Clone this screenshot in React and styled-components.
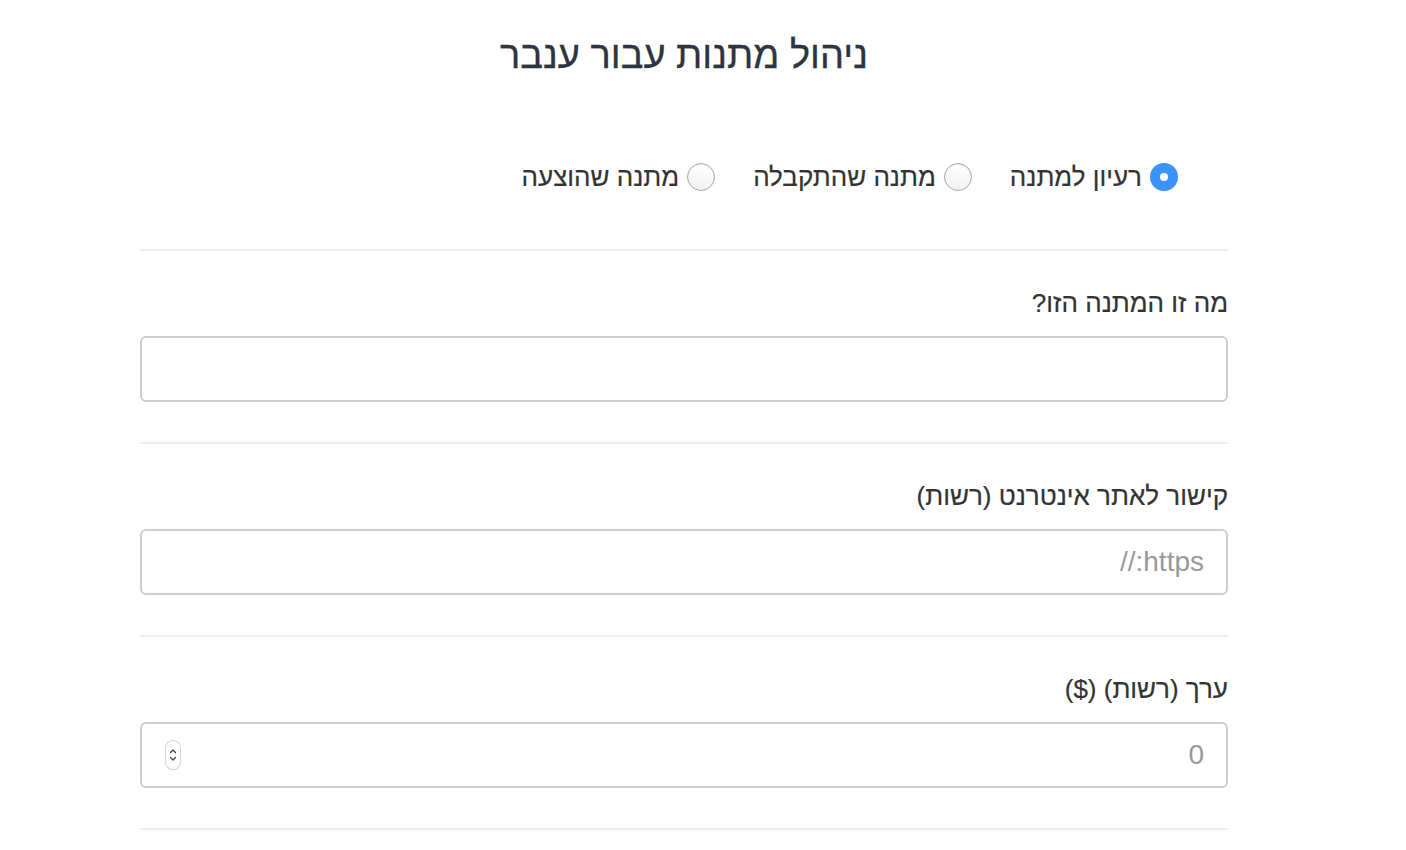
import React from "react";
import styled, { createGlobalStyle } from "styled-components";

const Global = createGlobalStyle`
  html, body { margin: 0; padding: 0; background: #fff; }
  body {
    font-family: "Liberation Sans", Arial, sans-serif;
    color: #333;
    direction: rtl;
  }
`;

const Page = styled.div`
  width: 1088px;
  margin: 0 178px 0 140px;
  direction: rtl;
`;

const Title = styled.h1`
  margin: 0;
  padding-top: 34px;
  font-size: 38px;
  line-height: 42px;
  font-weight: 500;
  color: #2e3540;
  text-align: center;
  -webkit-text-stroke: 0.3px #2e3540;
`;

const RadioRow = styled.div`
  display: flex;
  gap: 38px;
  padding-right: 50px;
  margin-top: 86px;
  height: 30px;
  align-items: center;
`;

const RadioOption = styled.label`
  display: flex;
  align-items: center;
  gap: 8px;
  font-size: 26px;
  color: #333;
  cursor: pointer;
  -webkit-text-stroke: 0.2px #333;
`;

const RadioCircle = styled.span`
  width: 28px;
  height: 28px;
  border-radius: 50%;
  box-sizing: border-box;
  display: flex;
  align-items: center;
  justify-content: center;
  flex-shrink: 0;
  background: ${(p) => (p.$checked ? "#3b93f7" : "linear-gradient(#ffffff, #f1f1f1)")};
  border: ${(p) => (p.$checked ? "none" : "1px solid #a9a9a9")};
  box-shadow: ${(p) => (p.$checked ? "none" : "inset 0 1px 1px rgba(0,0,0,0.08)")};
  &::after {
    content: "";
    display: ${(p) => (p.$checked ? "block" : "none")};
    width: 8px;
    height: 8px;
    border-radius: 50%;
    background: #fff;
  }
`;

const Divider = styled.hr`
  margin: 0;
  border: none;
  height: 2px;
  background: #eeeeee;
`;

const FirstDivider = styled(Divider)`
  margin-top: 57px;
`;

const Section = styled.div`
  padding-top: 37px;
  padding-bottom: 40px;
`;

const Label = styled.label`
  display: block;
  font-size: 26px;
  line-height: 30px;
  color: #333;
  margin-bottom: 18px;
  -webkit-text-stroke: 0.2px #333;
`;

const FieldBox = styled.div`
  display: flex;
  align-items: center;
  height: 66px;
  box-sizing: border-box;
  border: 2px solid #cfcfcf;
  border-radius: 6px;
  background: #fff;
  padding: 0 22px 0 24px;
`;

const Input = styled.input`
  flex: 1;
  min-width: 0;
  border: none;
  outline: none;
  background: transparent;
  font-family: "Liberation Sans", Arial, sans-serif;
  font-size: 28px;
  color: #333;
  direction: rtl;
  text-align: right;
  padding: 0;
  &::placeholder { color: #999; }
  &::-webkit-inner-spin-button,
  &::-webkit-outer-spin-button { -webkit-appearance: none; margin: 0; }
`;

const Spinner = styled.span`
  width: 14px;
  height: 28px;
  box-sizing: border-box;
  border-radius: 7px;
  box-shadow: 0 0 0 1px #d6d6d6, 0 1px 2px rgba(0,0,0,0.12);
  display: flex;
  align-items: center;
  justify-content: center;
  background: #fff;
`;

const SpinnerIcon = () => (
  <svg width="10" height="20" viewBox="0 0 10 20">
    <path d="M2.5 7.5 L5 5 L7.5 7.5" fill="none" stroke="#444" strokeWidth="1.3" strokeLinecap="round" strokeLinejoin="round" />
    <path d="M2.5 12.5 L5 15 L7.5 12.5" fill="none" stroke="#444" strokeWidth="1.3" strokeLinecap="round" strokeLinejoin="round" />
  </svg>
);

const options = [
  { label: "רעיון למתנה", checked: true },
  { label: "מתנה שהתקבלה", checked: false },
  { label: "מתנה שהוצעה", checked: false },
];

export default function App() {
  return (
    <>
      <Global />
      <Page>
        <Title>ניהול מתנות עבור ענבר</Title>
        <RadioRow>
          {options.map((o) => (
            <RadioOption key={o.label}>
              <RadioCircle $checked={o.checked} />
              {o.label}
            </RadioOption>
          ))}
        </RadioRow>
        <FirstDivider />
        <Section>
          <Label>מה זו המתנה הזו?</Label>
          <FieldBox>
            <Input type="text" />
          </FieldBox>
        </Section>
        <Divider />
        <Section>
          <Label>קישור לאתר אינטרנט (רשות)</Label>
          <FieldBox>
            <Input type="text" placeholder="https://" />
          </FieldBox>
        </Section>
        <Divider />
        <Section>
          <Label>ערך (רשות) ($)</Label>
          <FieldBox>
            <Input type="number" placeholder="0" />
            <Spinner>
              <SpinnerIcon />
            </Spinner>
          </FieldBox>
        </Section>
        <Divider />
      </Page>
    </>
  );
}
